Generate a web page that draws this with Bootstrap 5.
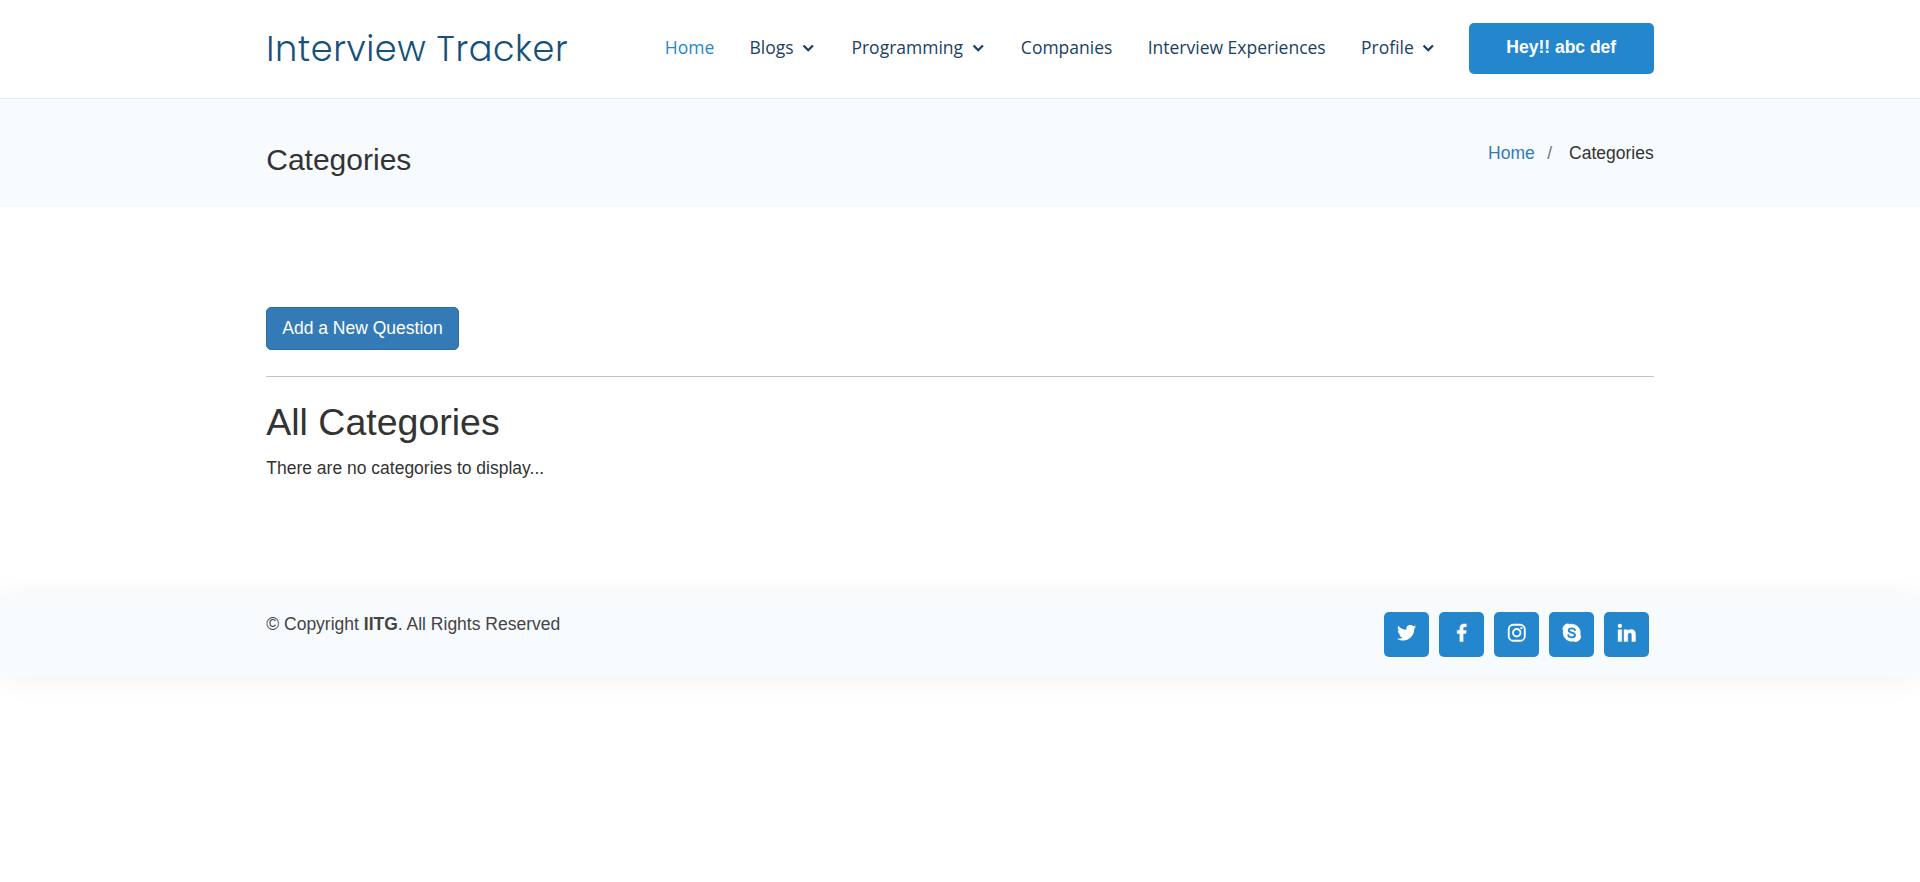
<!DOCTYPE html>
<html lang="en">
<head>
<meta charset="utf-8">
<meta name="viewport" content="width=device-width, initial-scale=1">
<title>Interview Tracker</title>
<link href="https://cdn.jsdelivr.net/npm/bootstrap@5.3.0/dist/css/bootstrap.min.css" rel="stylesheet">
<style>
body{font-family:"Liberation Sans",Arial,sans-serif;font-size:17.5px;line-height:25px;color:#333;background:#fff}
.page-wrap{width:1387.5px;max-width:100%;margin:0 auto}
.site-header{height:99px;padding-top:23px;border-bottom:1px solid #deeefb}
.site-logo{font-family:Poppins,Lato,sans-serif;font-weight:300;font-size:35px;letter-spacing:.625px;line-height:52px;color:#16507b;text-decoration:none}
.site-menu{gap:35.300px;margin-right:32.500px;font-family:"Open Sans",sans-serif;font-size:17.5px;line-height:48px}
.site-menu a{color:#1b3f63;text-decoration:none;white-space:nowrap}
.site-menu a.active{color:#2487ce}
.site-menu svg{width:12.500px;height:8.330px;margin:0 1.500px 2px 8.500px}
.user-btn{width:185px;height:51px;border-radius:5px;background:#2487ce;color:#fff;font-weight:700;line-height:48px;text-align:center;text-decoration:none}
.title-band{height:108px;background:#f7fbfe;padding-top:42px}
.title-band h2{font-size:30px;line-height:37px;font-weight:400}
.crumbs a{color:#337ab7;text-decoration:none}
.slash{color:#6c757d;padding:0 17px 0 12.500px}
.main-area{padding-top:100px;height:386.500px}
.ask-btn{--bs-btn-font-size:17.5px;--bs-btn-line-height:25px;--bs-btn-bg:#337ab7;--bs-btn-border-color:#2e6da4;--bs-btn-padding-x:15px;--bs-btn-padding-y:8px;--bs-btn-border-radius:5px}
.main-area hr{margin:25.500px 0;border-color:#c4c4c4;opacity:1}
.main-area h1{font-size:37.5px;line-height:41px;font-weight:400;margin-bottom:13px}
.site-footer{height:82.5px;padding:18.5px 0;background:#f7fbfe;box-shadow:0 2.500px 31px rgba(0,0,0,.06);color:#444}
.social{gap:10px;margin-right:5px}
.social a{width:45px;height:45px;border-radius:5px;background:#2487ce;color:#fff}
.social svg{width:23.500px;height:23.500px;fill:currentColor;margin:0 0 3.500px 1px}
</style>
</head>
<body class="min-vh-100">
<header class="site-header">
  <div class="page-wrap d-flex align-items-start justify-content-between">
    <a class="site-logo" href="#">Interview Tracker</a>
    <div class="d-flex align-items-start">
      <nav class="site-menu d-flex">
        <a class="active" href="#">Home</a>
        <a href="#">Blogs<svg viewBox="0 0 12 8"><path d="M1.500 1.500 6 6l4.500-4.500" fill="none" stroke="currentColor" stroke-width="2.200"/></svg></a>
        <a href="#">Programming<svg viewBox="0 0 12 8"><path d="M1.500 1.500 6 6l4.500-4.500" fill="none" stroke="currentColor" stroke-width="2.200"/></svg></a>
        <a href="#">Companies</a>
        <a href="#">Interview Experiences</a>
        <a href="#">Profile<svg viewBox="0 0 12 8"><path d="M1.500 1.500 6 6l4.500-4.500" fill="none" stroke="currentColor" stroke-width="2.200"/></svg></a>
      </nav>
      <a class="user-btn" href="#">Hey!! abc def</a>
    </div>
  </div>
</header>
<section class="title-band">
  <div class="page-wrap d-flex justify-content-between">
    <h2 class="m-0">Categories</h2>
    <div class="crumbs d-flex"><a href="#">Home</a><span class="slash">/</span><span>Categories</span></div>
  </div>
</section>
<main class="main-area">
  <div class="page-wrap">
    <a class="btn btn-primary ask-btn" href="#">Add a New Question</a>
    <hr>
    <h1>All Categories</h1>
    <p class="m-0">There are no categories to display...</p>
  </div>
</main>
<footer class="site-footer">
  <div class="page-wrap d-flex justify-content-between">
    <div>© Copyright <strong>IITG</strong>. All Rights Reserved</div>
    <div class="social d-flex">
      <a class="d-flex align-items-center justify-content-center" href="#" aria-label="Twitter"><svg viewBox="0 0 24 24"><path d="M19.633 7.997c.013.175.013.349.013.523 0 5.325-4.053 11.461-11.460 11.461-2.282 0-4.402-.661-6.186-1.809.324.037.636.050.973.050a8.070 8.070 0 0 0 5.001-1.721 4.036 4.036 0 0 1-3.767-2.793c.249.037.499.062.761.062.361 0 .724-.050 1.061-.137a4.027 4.027 0 0 1-3.230-3.953v-.050c.537.299 1.160.486 1.820.511a4.022 4.022 0 0 1-1.796-3.354c0-.748.199-1.434.548-2.032a11.457 11.457 0 0 0 8.306 4.215c-.062-.300-.100-.611-.100-.923a4.026 4.026 0 0 1 4.028-4.028c1.160 0 2.207.486 2.943 1.272a7.957 7.957 0 0 0 2.556-.973 4.020 4.020 0 0 1-1.771 2.220 8.073 8.073 0 0 0 2.319-.624 8.645 8.645 0 0 1-2.019 2.083z"/></svg></a>
      <a class="d-flex align-items-center justify-content-center" href="#" aria-label="Facebook"><svg viewBox="0 0 24 24"><path d="M13.397 20.997v-8.196h2.765l.411-3.209h-3.176V7.548c0-.926.258-1.560 1.587-1.560h1.684V3.127A22.336 22.336 0 0 0 14.201 3c-2.444 0-4.122 1.492-4.122 4.231v2.355H7.332v3.209h2.753v8.202h3.312z" stroke="currentColor" stroke-width=".5"/></svg></a>
      <a class="d-flex align-items-center justify-content-center" href="#" aria-label="Instagram"><svg viewBox="0 0 24 24"><rect x="3.800" y="3.800" width="16.400" height="16.400" rx="4.700" fill="none" stroke="currentColor" stroke-width="1.900"/><circle cx="12" cy="12" r="3.800" fill="none" stroke="currentColor" stroke-width="1.900"/><circle cx="16.800" cy="7.200" r="1.200"/></svg></a>
      <a class="d-flex align-items-center justify-content-center" href="#" aria-label="Skype"><svg viewBox="0 0 24 24"><path d="M20.500 13.700A8.700 8.700 0 0 0 10.300 3.500 5.100 5.100 0 0 0 3.500 10.300 8.700 8.700 0 0 0 13.700 20.500 5.100 5.100 0 0 0 20.500 13.700Z" stroke="currentColor" stroke-width=".8"/><path d="M15.300 9.400C14.800 6.900 8.900 6.800 8.900 9.700c0 2.800 6.400 1.500 6.400 4.600 0 3.300-6.400 3.200-6.900.200" fill="none" stroke="#2487ce" stroke-width="1.900" stroke-linecap="round"/></svg></a>
      <a class="d-flex align-items-center justify-content-center" href="#" aria-label="LinkedIn"><svg viewBox="0 0 24 24"><circle cx="4.983" cy="5.009" r="2.188"/><path d="M9.237 8.855v12.139h3.769v-6.003c0-1.584.298-3.118 2.262-3.118 1.937 0 1.961 1.811 1.961 3.218v5.904H21v-6.657c0-3.270-.704-5.783-4.526-5.783-1.835 0-3.065 1.007-3.568 1.960h-.051v-1.660H9.237zm-6.142 0H6.870v12.139H3.095z" stroke="currentColor" stroke-width=".4"/></svg></a>
    </div>
  </div>
</footer>
<script src="https://cdn.jsdelivr.net/npm/bootstrap@5.3.0/dist/js/bootstrap.bundle.min.js"></script>
</body>
</html>
